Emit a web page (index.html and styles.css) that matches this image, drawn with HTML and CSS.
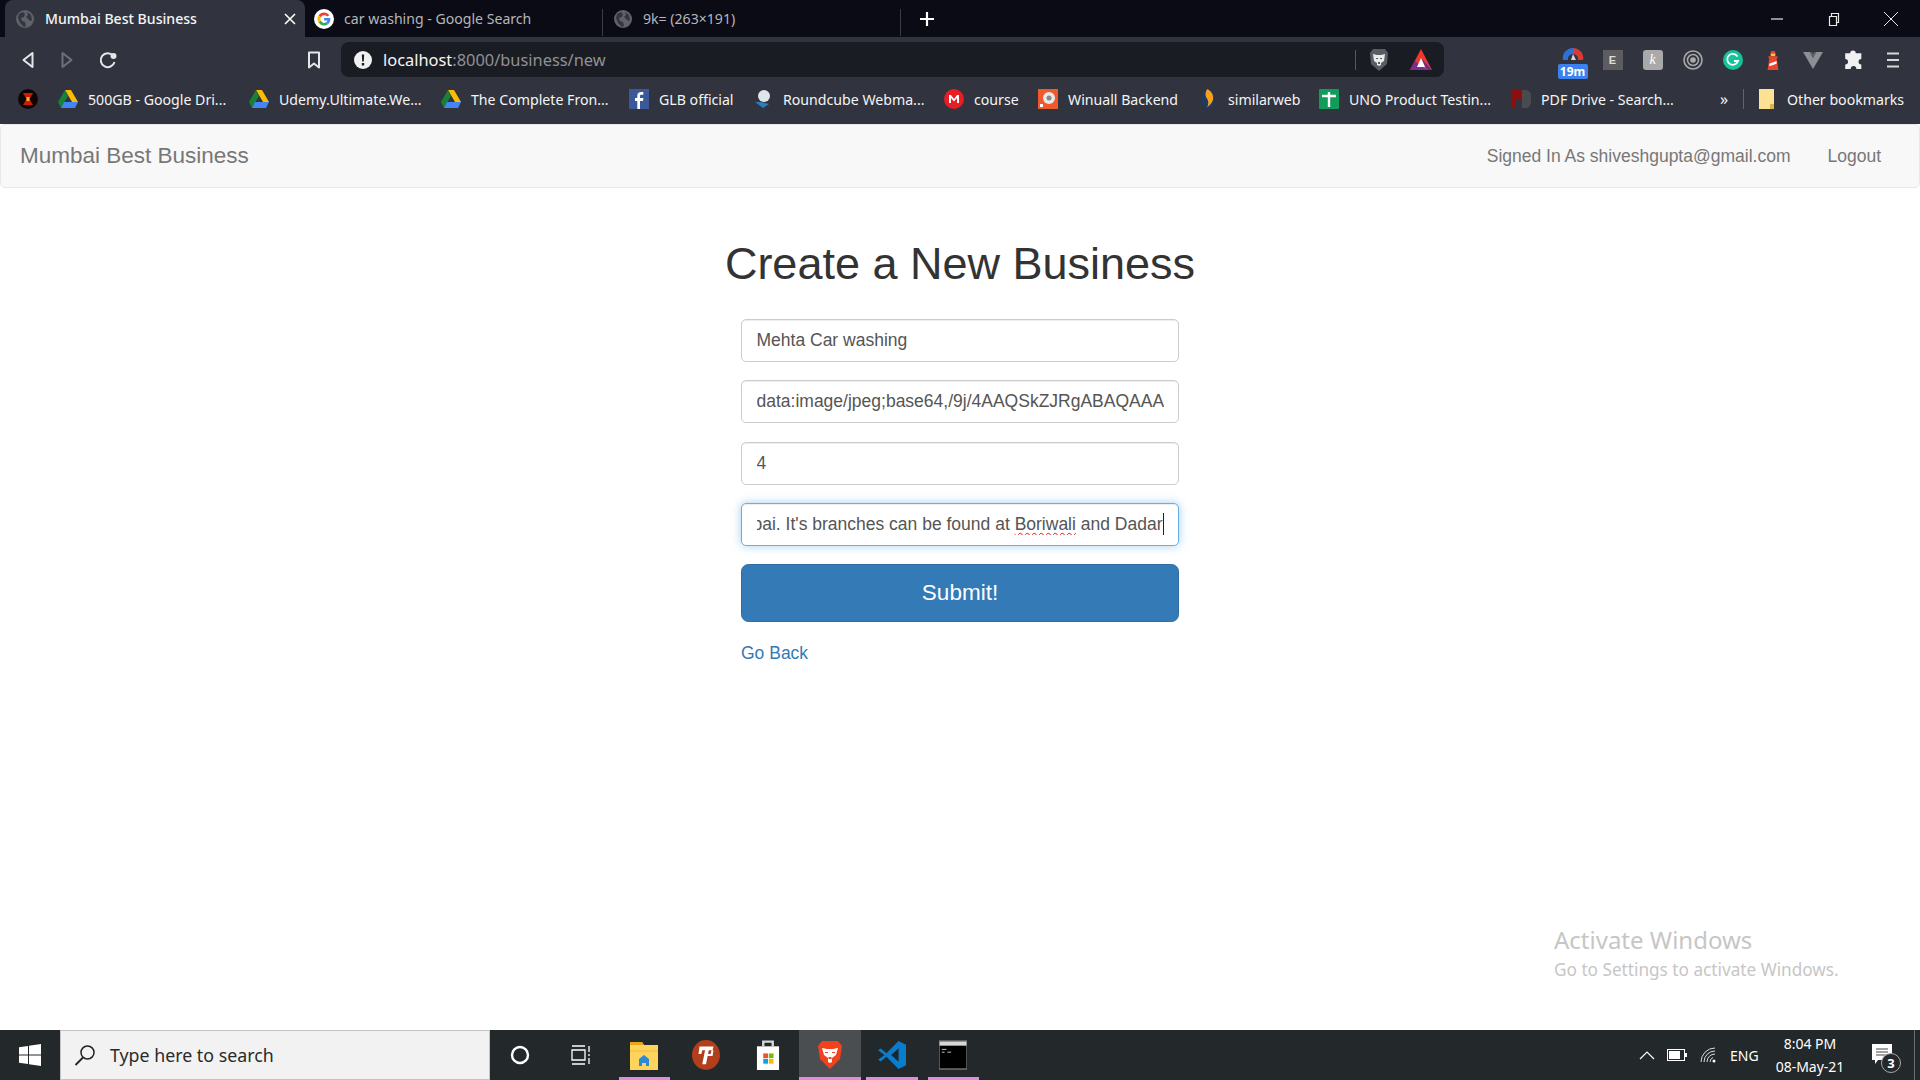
FILE: index.html
```html
<!DOCTYPE html>
<html lang="en">
<head>
<meta charset="utf-8">
<title>Mumbai Best Business</title>
<link rel="stylesheet" href="styles.css">
</head>
<body>
<svg class="defs" width="0" height="0">
  <defs>
    <symbol id="globe" viewBox="0 0 18 18"><circle cx="9" cy="9" r="9" fill="#5f626b"/><path d="M3 4l4-2 2 2-1 3-3 1 1 3 3 1 1 4-2 1-4-4-2-5zM11 2l4 3 1 5-2 1-2-2-2-2 2-2z" fill="#33363f"/></symbol>
    <symbol id="drive" viewBox="0 0 20 18"><path d="M7 0h6l7 12h-6z" fill="#fbbc04"/><path d="M7 0l3 6-7 12-3-6z" fill="#188038"/><path d="M6 12h14l-3 6H3z" fill="#4285f4"/></symbol>
  </defs>
</svg>
<div class="screen">
  <header class="tabstrip">
    <div class="tab tab-active">
      <svg class="ic18"><use href="#globe"/></svg>
      <span class="tab-title">Mumbai Best Business</span>
      <svg class="tab-close" viewBox="0 0 12 12"><path d="M1 1l10 10M11 1L1 11" stroke="#fff" stroke-width="1.6"/></svg>
    </div>
    <div class="tab tab-g">
      <svg class="ic20" viewBox="0 0 20 20"><circle cx="10" cy="10" r="10" fill="#fff"/><path d="M15.4 6.2A6.5 6.5 0 0 0 4.6 6.4l2.3 1.8a3.7 3.7 0 0 1 6.2-.6z" fill="#ea4335"/><path d="M4.6 6.4a6.5 6.5 0 0 0 0 7.2l2.3-1.8a3.7 3.7 0 0 1 0-3.6z" fill="#fbbc04"/><path d="M4.6 13.6a6.5 6.5 0 0 0 9.6 1.4l-2.2-1.8a3.7 3.7 0 0 1-5.1-1.4z" fill="#34a853"/><path d="M16.3 9h-6.2v2.6h3.5a3 3 0 0 1-1.6 1.6l2.2 1.8c1.5-1.3 2.4-3.4 2.1-6z" fill="#4285f4"/></svg>
      <span class="tab-dim">car washing - Google Search</span>
    </div>
    <div class="tab tab-img">
      <svg class="ic18"><use href="#globe"/></svg>
      <span class="tab-dim">9k= (263×191)</span>
    </div>
    <svg class="newtab" viewBox="0 0 16 16"><path d="M8 1v14M1 8h14" stroke="#fff" stroke-width="2.2"/></svg>
    <div class="winctl">
      <svg viewBox="0 0 14 14"><path d="M1 7h12" stroke="#e8e8e8" stroke-width="1.2"/></svg>
      <svg viewBox="0 0 14 14"><path d="M2.500 4.500h7v9h-7zM4.500 4V1.500h7v9H10" fill="none" stroke="#e8e8e8" stroke-width="1.2"/></svg>
      <svg viewBox="0 0 14 14"><path d="M0 0l14 14M14 0L0 14" stroke="#e8e8e8" stroke-width="1"/></svg>
    </div>
  </header>

  <div class="toolbar">
    <div class="navbtns">
      <svg viewBox="0 0 14 18"><path d="M11.500 2L2.500 9l9 7z" fill="none" stroke="#e6e6e8" stroke-width="2" stroke-linejoin="round"/></svg>
      <svg viewBox="0 0 14 18"><path d="M2.500 2l9 7-9 7z" fill="none" stroke="#6d7079" stroke-width="2" stroke-linejoin="round"/></svg>
      <svg viewBox="0 0 18 18"><path d="M15.500 11a7 7 0 1 1-1.500-6.500" fill="none" stroke="#e6e6e8" stroke-width="2"/><circle cx="14.500" cy="5" r="3" fill="#e6e6e8"/></svg>
    </div>
    <svg class="bookmark" viewBox="0 0 14 18"><path d="M2 1.500h10v15l-5-4-5 4z" fill="none" stroke="#e6e6e8" stroke-width="2" stroke-linejoin="round"/></svg>
    <div class="omnibox">
      <svg class="ic18" viewBox="0 0 18 18"><circle cx="9" cy="9" r="9" fill="#f1f1f1"/><path d="M7.800 3.500h2.400l-.4 7H8.200zM7.800 12h2.400v2.400H7.800z" fill="#1b1d24"/></svg>
      <span class="url"><b>localhost</b>:8000/business/new</span>
      <i class="omni-sep"></i>
      <svg class="brave-mini" viewBox="0 0 20 24"><path d="M4 1h12l3 4-1 11-8 7-8-7L1 5z" fill="#5a5c64"/><path d="M4 6l4 1h4l4-1-1 7-3 2v2l-2 1-2-1v-2l-3-2z" fill="#e9e9ea"/><path d="M7 10h2v1H7zM11 10h2v1h-2zM9 14h2v2H9z" fill="#5a5c64"/></svg>
      <svg class="tri" viewBox="0 0 24 24"><path d="M12 1l11 21H1z" fill="#f1392b"/><path d="M1 22l5-9 12 9z" fill="#7c2d91"/><path d="M18 22l-6-12 11 12z" fill="#662d91"/><path d="M12 10l4 9H8z" fill="#fff"/></svg>
    </div>
    <div class="exts">
      <div class="ext ext-speed">
        <svg viewBox="0 0 26 16"><path d="M3 15a10 10 0 0 1 10-12v6a5 5 0 0 0-5 6z" fill="#2f6fd6"/><path d="M13 3a10 10 0 0 1 10 12h-5a5 5 0 0 0-5-6z" fill="#d93a32"/><path d="M11 15l2-6 3 6z" fill="#d9d9d9"/></svg>
        <span class="speed-badge">19m</span>
      </div>
      <div class="ext"><span class="ext-e">E</span></div>
      <div class="ext"><span class="ext-k">k</span></div>
      <div class="ext"><svg viewBox="0 0 20 20"><circle cx="10" cy="10" r="9" fill="none" stroke="#aaa" stroke-width="1.600"/><circle cx="10" cy="10" r="5.500" fill="none" stroke="#aaa" stroke-width="1.500"/><circle cx="10" cy="10" r="2.800" fill="#aaa"/></svg></div>
      <div class="ext"><svg viewBox="0 0 20 20"><circle cx="10" cy="10" r="10" fill="#15c39a"/><path d="M14.500 6.500A5.500 5.500 0 1 0 15 11h-4" fill="none" stroke="#fff" stroke-width="1.800"/></svg></div>
      <div class="ext"><svg viewBox="0 0 20 22"><path d="M8 1h4l1 4H7z" fill="#e8442e"/><path d="M7.500 4h5v3h-5z" fill="#f6c244"/><path d="M5 7h10v2H5zM6 9h8l2 13H4z" fill="#e8442e"/><path d="M6 15l8-3v3l-8 3z" fill="#fff"/></svg></div>
      <div class="ext"><svg viewBox="0 0 20 18"><path d="M0 1h7l3 6 3-6h7L10 18z" fill="#8d8f95"/><path d="M7 1l3 6 3-6h-2l-1 2-1-2z" fill="#5f6168"/></svg></div>
      <div class="ext"><svg viewBox="0 0 18 18"><path d="M6.500 3a2.500 2.500 0 0 1 5 0h5v5a2.500 2.500 0 0 0 0 5v4H12a2.500 2.500 0 0 0-5 0H2v-4a2.500 2.500 0 0 0 0-5V3z" fill="#f1f1f1"/></svg></div>
      <div class="ext ext-menu"><svg viewBox="0 0 12 16"><path d="M0 1.500h12M0 8h12M0 14.500h12" stroke="#d8d8d8" stroke-width="1.800"/></svg></div>
    </div>
  </div>

  <nav class="bookmarks">
    <div class="bm"><svg viewBox="0 0 20 20"><circle cx="10" cy="10" r="10" fill="#100605"/><path d="M5 4h10l-3.500 6L15 16H5l3.500-6z" fill="#c81e08"/><rect x="8.500" y="8" width="3" height="4" fill="#ffb030"/></svg></div>
    <div class="bm"><svg viewBox="0 0 20 18"><use href="#drive"/></svg><span>500GB - Google Dri...</span></div>
    <div class="bm"><svg viewBox="0 0 20 18"><use href="#drive"/></svg><span>Udemy.Ultimate.We...</span></div>
    <div class="bm"><svg viewBox="0 0 20 18"><use href="#drive"/></svg><span>The Complete Fron...</span></div>
    <div class="bm"><svg viewBox="0 0 20 20"><rect width="20" height="20" fill="#3b5998"/><path d="M11 20v-8h3l.4-3H11V7.200c0-.9.3-1.400 1.500-1.400h1.800V3.100c-2.800-.4-5.800-.3-6 3.400V9H6v3h2.300v8z" fill="#fff"/></svg><span>GLB official</span></div>
    <div class="bm"><svg viewBox="0 0 20 20"><path d="M2 13l8 6 6-4-8-2z" fill="#2c7cc0"/><circle cx="11" cy="7" r="6" fill="#dfe6ea"/></svg><span>Roundcube Webma...</span></div>
    <div class="bm"><svg viewBox="0 0 20 20"><circle cx="10" cy="10" r="10" fill="#ea1d25"/><path d="M5 14V6h2l3 4 3-4h2v8h-2V9l-3 3.500L7 9v5z" fill="#fff"/></svg><span>course</span></div>
    <div class="bm"><svg viewBox="0 0 20 20"><rect width="20" height="20" fill="#f0592a"/><circle cx="11" cy="9" r="6" fill="#e8e8e8"/><circle cx="11" cy="9" r="2.500" fill="#888"/><path d="M2 15h3v3H2z" fill="#fff"/></svg><span>Winuall Backend</span></div>
    <div class="bm"><svg viewBox="0 0 20 24"><ellipse cx="10" cy="12" rx="8" ry="12" fill="#1e3a5f"/><path d="M9 0c6 3 8 8 7 13-1 4-4 7-7 9 1-3 2-5 1-8-1-3-3-4-3-7 0-3 1-5 2-7z" fill="#f7a11a"/></svg><span>similarweb</span></div>
    <div class="bm"><svg viewBox="0 0 20 20"><rect width="20" height="20" rx="1" fill="#0f9d58"/><path d="M3 7h14M10 3v15" stroke="#fff" stroke-width="2.400"/></svg><span>UNO Product Testin...</span></div>
    <div class="bm"><svg viewBox="0 0 22 20"><path d="M1 0h8a4 4 0 0 1 0 11H5v9H1z" fill="#8c0f10"/><path d="M12 0h4a6 6 0 0 1 6 6v8a6 6 0 0 1-6 6h-4z" fill="#4a4b50"/></svg><span>PDF Drive - Search...</span></div>
    <div class="bm bm-more">»</div>
    <i class="bm-sep"></i>
    <div class="bm bm-last"><svg viewBox="0 0 16 20"><path d="M0 0h15v20H0z" fill="#fde293"/><path d="M11 15h4v5h-4z" fill="#d8b544"/></svg><span>Other bookmarks</span></div>
  </nav>

  <main class="page">
    <div class="appnav">
      <a class="brand">Mumbai Best Business</a>
      <div class="appnav-right">
        <span>Signed In As shiveshgupta@gmail.com</span>
        <a>Logout</a>
      </div>
    </div>
    <section class="content">
      <h1>Create a New Business</h1>
      <form class="form">
        <div class="field"><span class="val">Mehta Car washing</span></div>
        <div class="field"><span class="val">data:image/jpeg;base64,/9j/4AAQSkZJRgABAQAAAQABAAD</span></div>
        <div class="field"><span class="val">4</span></div>
        <div class="field field-focus"><span class="val val-end"><span class="caret">Mehta Car washing is the best in Mumbai. It's branches can be found at <u class="spell">Boriwali</u> and Dadar</span></span></div>
        <button type="button" class="submit">Submit!</button>
        <a class="back">Go Back</a>
      </form>
    </section>
    <div class="activate">
      <div class="act1">Activate Windows</div>
      <div class="act2">Go to Settings to activate Windows.</div>
    </div>
  </main>

  <footer class="taskbar">
    <div class="start"><svg viewBox="0 0 22 22"><path d="M0 3.200l9-1.300v8.600H0zM10 1.700L22 0v10.500H10zM0 11.500h9v8.600l-9-1.300zM10 11.500h12V22l-12-1.700z" fill="#fff"/></svg></div>
    <div class="search">
      <svg viewBox="0 0 22 22"><circle cx="13.500" cy="8.500" r="6.500" fill="none" stroke="#222" stroke-width="1.500"/><path d="M9 13.500L1.500 21" stroke="#222" stroke-width="1.800"/></svg>
      <span>Type here to search</span>
    </div>
    <div class="tb-apps">
      <div class="tb"><svg class="i20" viewBox="0 0 20 20"><circle cx="10" cy="10" r="8" fill="none" stroke="#fff" stroke-width="2.400"/></svg></div>
      <div class="tb tb-view"><svg class="i20" viewBox="0 0 20 20"><path d="M1 1h13M1 5h13v10H1zM1 19h13M18 1v6M18 9v2M18 13v6" fill="none" stroke="#fff" stroke-width="1.300"/></svg></div>
      <div class="tb tb-on"><svg viewBox="0 0 28 30"><path d="M0 2h12l2 3h14v25H0z" fill="#ffd45c"/><path d="M0 2h12l2 3H0z" fill="#e6a817"/><path d="M9 26v-7l5-4 5 4v7h-3v-3h-4v3z" fill="#2a8ad6"/><path d="M0 12h28v-2H0z" fill="#f7c948"/></svg></div>
      <div class="tb"><svg viewBox="0 0 30 32"><ellipse cx="15" cy="16" rx="15" ry="16" fill="#b13e1d"/><path d="M8 7h15l-1 4h-4l-3 15h-4l3-15h-3l-1 4H7zM16 15h4l1-4h2l-1 6h-6z" fill="#fff"/></svg></div>
      <div class="tb"><svg viewBox="0 0 30 38"><path d="M9 8V2h12v6" fill="none" stroke="#d8d8d8" stroke-width="3"/><path d="M1 8h28v30H1z" fill="#fff"/><path d="M9 17h6v6H9z" fill="#f25022"/><path d="M16 17h6v6h-6z" fill="#7fba00"/><path d="M9 24h6v6H9z" fill="#00a4ef"/><path d="M16 24h6v6h-6z" fill="#ffb900"/></svg></div>
      <div class="tb tb-sel tb-on"><svg viewBox="0 0 26 30"><path d="M5 1h16l4 5-2 13-10 10L3 19 1 6z" fill="#f1411f"/><path d="M5 8l5 1h6l5-1-2 7-4 3v4l-2 1-2-1v-4l-4-3z" fill="#fff"/><path d="M8 12h3v1H8zM15 12h3v1h-3zM11.500 17h3v2h-3z" fill="#f1411f"/></svg></div>
      <div class="tb tb-on"><svg viewBox="0 0 30 30"><path d="M22 0l8 4v22l-8 4L9 17l-6 5-3-2 7-5-7-5 3-2 6 5z" fill="#0a7ccc"/><path d="M22 8l-8 7 8 7z" fill="#1f2527"/></svg></div>
      <div class="tb tb-on"><svg viewBox="0 0 30 30"><rect width="30" height="30" fill="#000"/><rect width="30" height="5" fill="#d8d8d8"/><rect width="30" height="30" fill="none" stroke="#777" stroke-width="1.500"/><path d="M3 9h5M3 12h3M9 12h4" stroke="#ccc" stroke-width="1"/></svg></div>
    </div>
    <div class="tray">
      <svg class="t-caret" viewBox="0 0 16 10"><path d="M1 9l7-7 7 7" fill="none" stroke="#fff" stroke-width="1.200"/></svg>
      <svg class="t-batt" viewBox="0 0 20 12"><rect x=".5" y=".5" width="17" height="11" fill="none" stroke="#fff"/><rect x="2" y="2" width="11" height="8" fill="#fff"/><rect x="18" y="4" width="2" height="4" fill="#fff"/></svg>
      <svg class="t-wifi" viewBox="0 0 16 16"><path d="M1 15A14 14 0 0 1 15 1M4 15A11 11 0 0 1 15 4M7 15a8 8 0 0 1 8-8M10 15a5 5 0 0 1 3-4.500" fill="none" stroke="#eee" stroke-width=".9"/><circle cx="14" cy="14" r="1.500" fill="#fff"/></svg>
      <span class="t-eng">ENG</span>
      <div class="clock"><div>8:04 PM</div><div>08-May-21</div></div>
      <div class="notif">
        <svg viewBox="0 0 20 20"><path d="M0 0h20v16H6l-3 4v-4H0z" fill="#fff"/><path d="M4 5h12M4 8h12M4 11h12" stroke="#444" stroke-width="1"/></svg>
        <span class="notif-count">3</span>
      </div>
      <i class="showdesk"></i>
    </div>
  </footer>
</div>
</body>
</html>
```
FILE: styles.css
```css
* { box-sizing: border-box; }
html, body { margin: 0; height: 100%; overflow: hidden; }
body { font-family: "Liberation Sans", Arial, sans-serif; background: #fff; }
.defs { position: absolute; }
.screen { display: flex; flex-direction: column; height: 1080px; width: 1920px; }
svg { display: block; flex: none; }
.ic18 { width: 18px; height: 18px; }
.ic20 { width: 20px; height: 20px; }

/* tab strip */
.tabstrip { height: 37px; background: #0a0b14; display: flex; align-items: stretch; padding-left: 5px; font-family: "Noto Sans", sans-serif; font-size: 14.100px; }
.tab { display: flex; align-items: center; gap: 11px; position: relative; }
.tab-active { width: 300px; background: #31343f; border-radius: 8px 8px 0 0; padding-left: 11px; color: #f4f4f4; font-weight: 500; }
.tab-title { flex: 1; }
.tab-close { width: 12px; height: 12px; margin-right: 9px; }
.tab-g { width: 298px; padding-left: 9px; gap: 10px; }
.tab-img { width: 298px; padding-left: 11px; }
.tab-g::after, .tab-img::after { content: ""; position: absolute; right: 0; top: 9px; bottom: 1px; width: 1px; background: #3a3c46; }
.tab-dim { color: #b5b6bb; }
.newtab { width: 16px; height: 16px; align-self: center; margin-left: 18px; }
.winctl { margin-left: auto; display: flex; gap: 43px; align-items: center; padding-right: 22px; }
.winctl svg { width: 14px; height: 14px; }

/* toolbar */
.toolbar { height: 45px; background: #31343f; display: flex; align-items: center; padding-left: 21px; }
.navbtns { display: flex; align-items: center; gap: 25px; width: 286px; }
.navbtns svg { width: 14px; height: 18px; }
.navbtns svg:last-child { width: 18px; height: 18px; }
.bookmark { width: 14px; height: 18px; margin-right: 20px; }
.omnibox { width: 1103px; height: 35px; background: #1a1c23; border-radius: 8px; display: flex; align-items: center; padding-left: 13px; }
.url { font-family: "Noto Sans", sans-serif; font-size: 16.400px; color: #8f9096; margin-left: 11px; flex: 1; }
.url b { font-weight: 400; color: #f5f5f5; }
.omni-sep { width: 1px; height: 20px; background: #55575f; }
.brave-mini { width: 20px; height: 24px; margin-left: 13px; }
.tri { width: 24px; height: 24px; margin: 0 11px 0 20px; }
.exts { display: flex; align-items: center; margin-left: 108.500px; }
.ext { width: 40px; height: 40px; display: flex; flex-direction: column; align-items: center; justify-content: center; position: relative; }
.ext > svg { width: 20px; height: 20px; }
.ext-speed > svg { width: 26px; height: 16px; margin-top: -14px; }
.ext-menu > svg { width: 12px; height: 16px; }
.speed-badge { position: absolute; left: 5px; top: 24px; width: 30px; height: 15px; border-radius: 2px; background: #3b82f0; color: #fff; font: 700 12px/15px "Noto Sans", sans-serif; text-align: center; }
.ext-e { width: 20px; height: 20px; background: #5d5d5f; color: #ddd; font: 700 11px/20px "Liberation Sans", sans-serif; text-align: center; }
.ext-k { width: 20px; height: 20px; border-radius: 3px; background: #a9a9a9; color: #fff; font: italic 14px/19px "Liberation Serif", serif; text-align: center; }

/* bookmarks */
.bookmarks { height: 42px; background: #31343f; display: grid; grid-template-columns: 40px 191px 192px 188px 124px 191px 94px 160px 121px 192px 209px 23px 16px 1fr; align-items: center; padding: 0 0 8px 18px; font-family: "Noto Sans", sans-serif; font-size: 14.150px; color: #f4f4f4; }
.bm { display: flex; align-items: center; gap: 10px; white-space: nowrap; }
.bm svg { width: 20px; height: 20px; }
.bm-more { font-size: 16px; }
.bm-sep { width: 1px; height: 20px; background: #62646c; }
.bm-last svg { width: 16px; height: 20px; margin-right: 2px; }

/* page */
.page { flex: 1; position: relative; background: #fff; display: flex; flex-direction: column; }
.appnav { height: 64px; flex: none; background: #f8f8f8; border: 1px solid #e7e7e7; border-radius: 5px; display: flex; align-items: center; justify-content: space-between; padding: 0 38px 0 19px; color: #777; font-size: 17.500px; }
.brand { font-size: 22.500px; }
.appnav-right { display: flex; gap: 37px; }
.content { display: flex; flex-direction: column; align-items: center; padding-top: 51px; }
h1 { margin: 0 0 30.500px; font-size: 45px; line-height: 49.500px; font-weight: 400; color: #333; }
.form { width: 438px; display: flex; flex-direction: column; gap: 18.250px; }
.field { height: 43px; border: 1.250px solid #ccc; border-radius: 5px; padding: 0 14.500px; display: flex; align-items: center; color: #555; font-size: 17.500px; background: #fff; box-shadow: inset 0 1px 1px rgba(0,0,0,.075); }
.val { flex: 1; min-width: 0; overflow: hidden; white-space: nowrap; }
.val-end { display: flex; justify-content: flex-end; }
.caret { flex: none; border-right: 1px solid #222; line-height: 22px; }
.spell { text-decoration: underline wavy #e81010 1.250px; text-underline-offset: 2px; text-decoration-skip-ink: none; }
.field-focus { border-color: #66afe9; box-shadow: inset 0 1px 1px rgba(0,0,0,.075), 0 0 10px rgba(102,175,233,.6); }
.submit { height: 58px; background: #337ab7; border: 1.250px solid #2e6da4; border-radius: 7.500px; color: #fff; font: 22.500px "Liberation Sans", sans-serif; padding: 0; }
.back { color: #337ab7; font-size: 17.500px; line-height: 26px; }
.activate { position: absolute; left: 1554px; top: 799px; font-family: "Noto Sans", sans-serif; color: #c6c6c6; }
.act1 { font-size: 24px; line-height: 34px; }
.act2 { font-size: 17.200px; line-height: 25px; }

/* taskbar */
.taskbar { height: 50px; background: #23282a; display: flex; align-items: stretch; font-family: "Noto Sans", sans-serif; }
.start { width: 60px; display: flex; align-items: center; justify-content: center; }
.start svg { width: 22px; height: 22px; }
.search { width: 430px; background: #f2f2f2; border: 1px solid #c4c4c4; display: flex; align-items: center; gap: 14px; padding: 0 0 1px 13px; color: #2a2a2a; font-size: 17.800px; }
.search svg { width: 22px; height: 22px; }
.tb-apps { display: flex; }
.tb { width: 61.800px; display: flex; align-items: center; justify-content: center; position: relative; }
.tb svg { width: 28px; height: 30px; }
.tb .i20 { width: 20px; height: 20px; }
.tb:first-child { padding-right: 2px; }
.tb-view { padding-right: 4px; }
.tb-sel { background: #4b4e50; }
.tb-on::after { content: ""; position: absolute; left: 5px; right: 5px; bottom: 0; height: 3px; background: #e38bdb; }
.tb-sel::after { left: 0; right: 0; }
.tray { margin-left: auto; display: flex; align-items: center; color: #fff; }
.t-caret { width: 16px; height: 10px; margin-right: 12px; }
.t-batt { width: 20px; height: 12px; margin-right: 13px; }
.t-wifi { width: 16px; height: 16px; margin-right: 14px; }
.t-eng { font-size: 14px; width: 33px; margin-right: 10px; }
.clock { width: 74px; text-align: center; font-size: 14px; line-height: 23px; margin-right: 25px; }
.notif { width: 22px; height: 22px; position: relative; margin-right: 20px; }
.notif svg { width: 20px; height: 20px; }
.notif-count { position: absolute; left: 9px; top: 9px; width: 20px; height: 20px; border-radius: 50%; background: #23282a; border: 1px solid #aaa; font: 700 13px/18px "Noto Sans", sans-serif; text-align: center; }
.showdesk { width: 1px; height: 50px; background: #6a6d6f; margin-right: 5px; }
```
